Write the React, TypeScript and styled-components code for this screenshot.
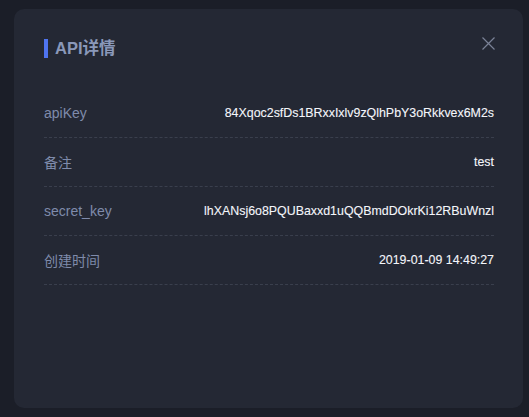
import React from "react";
import styled, { createGlobalStyle } from "styled-components";

const Global = createGlobalStyle`
  html, body { margin: 0; padding: 0; background: #1b1e28; }
  body { font-family: "Liberation Sans", "Noto Sans CJK SC", sans-serif; }
`;

const Page = styled.div`
  width: 529px;
  height: 417px;
  padding: 9px 6px 0 14px;
  box-sizing: border-box;
`;

const Panel = styled.div`
  width: 509px;
  height: 399px;
  box-sizing: border-box;
  background: #242834;
  border-radius: 10px;
  padding: 30px 29px 0 30px;
`;

const Header = styled.div`
  display: flex;
  align-items: center;
  justify-content: space-between;
  height: 19px;
  margin-bottom: 31px;
`;

const Title = styled.h2`
  margin: 0;
  display: flex;
  align-items: center;
  gap: 7px;
  font-size: 16.5px;
  font-weight: 700;
  color: #8a98b9;
  line-height: 19px;
  font-family: "Liberation Sans", "Noto Sans CJK SC", sans-serif;
`;

const Bar = styled.span`
  width: 4px;
  height: 19px;
  background: #4f74f0;
  display: block;
`;

const Close = styled.button`
  border: 0;
  background: none;
  padding: 0;
  margin: -10px -1px 0 0;
  width: 13px;
  height: 13px;
  display: flex;
  align-items: center;
  justify-content: center;
  cursor: pointer;
`;

const Row = styled.div`
  display: flex;
  align-items: center;
  justify-content: space-between;
  height: 48px;
  border-bottom: 1px dashed #3a3f4d;
`;

const Label = styled.span`
  font-size: 14px;
  color: #7f8bab;
  font-family: "Liberation Sans", "Noto Sans CJK SC", sans-serif;
`;

const Value = styled.span`
  font-size: 12.4px;
  color: #f4f6fb;
  font-family: "Liberation Sans", "Noto Sans CJK SC", sans-serif;
  -webkit-text-stroke: 0.1px #f4f6fb;
`;

const rows = [
  { label: "apiKey", value: "84Xqoc2sfDs1BRxxIxlv9zQlhPbY3oRkkvex6M2s" },
  { label: "备注", value: "test" },
  { label: "secret_key", value: "lhXANsj6o8PQUBaxxd1uQQBmdDOkrKi12RBuWnzl" },
  { label: "创建时间", value: "2019-01-09 14:49:27" },
];

export default function App() {
  return (
    <>
      <Global />
      <Page>
        <Panel>
          <Header>
            <Title>
              <Bar />
              API详情
            </Title>
            <Close aria-label="close">
              <svg width="13" height="13" viewBox="0 0 13 13">
                <path d="M0.5 0.5 L12.5 12.5 M12.5 0.5 L0.5 12.5" stroke="#7a8196" strokeWidth="1.2" fill="none" />
              </svg>
            </Close>
          </Header>
          {rows.map((r) => (
            <Row key={r.label}>
              <Label>{r.label}</Label>
              <Value>{r.value}</Value>
            </Row>
          ))}
        </Panel>
      </Page>
    </>
  );
}
